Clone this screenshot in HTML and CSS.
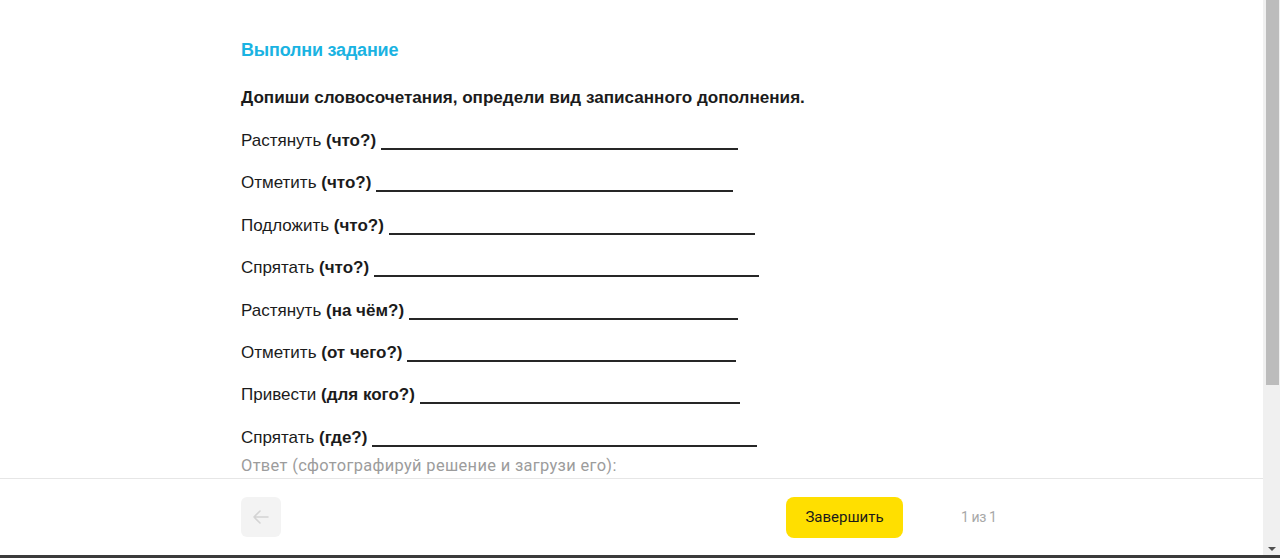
FILE: index.html
```html
<!DOCTYPE html>
<html lang="ru">
<head>
<meta charset="utf-8">
<title>Выполни задание</title>
<link rel="stylesheet" href="styles.css">
</head>
<body>
<div class="app">
  <div class="viewport">
    <main class="main">
      <h1 class="title">Выполни задание</h1>
      <p class="instruction">Допиши словосочетания, определи вид записанного дополнения.</p>
      <div class="rows">
        <div class="row">Растянуть <b>(что?)</b> <span class="blank w357"></span></div>
        <div class="row">Отметить <b>(что?)</b> <span class="blank w357"></span></div>
        <div class="row">Подложить <b>(что?)</b> <span class="blank w366"></span></div>
        <div class="row">Спрятать <b>(что?)</b> <span class="blank w385"></span></div>
        <div class="row">Растянуть <b>(на чём?)</b> <span class="blank w329"></span></div>
        <div class="row">Отметить <b>(от чего?)</b> <span class="blank w329"></span></div>
        <div class="row">Привести <b>(для кого?)</b> <span class="blank w320"></span></div>
        <div class="row">Спрятать <b>(где?)</b> <span class="blank w385"></span></div>
      </div>
      <p class="answer">Ответ (сфотографируй решение и загрузи его):</p>
    </main>
    <footer class="footer">
      <button class="back" aria-label="Назад">
        <svg width="20" height="20" viewBox="0 0 20 20" fill="none" stroke="#d4d4d4" stroke-width="1.6" stroke-linecap="round" stroke-linejoin="round"><path d="M17 10H3M9 4l-6 6 6 6"/></svg>
      </button>
      <button class="finish">Завершить</button>
      <span class="pager">1 из 1</span>
    </footer>
  </div>
  <div class="scrollbar">
    <div class="thumb"></div>
    <div class="arrow"></div>
  </div>
</div>
</body>
</html>
```
FILE: styles.css
```css
* { box-sizing: border-box; }
html, body { margin: 0; padding: 0; height: 100%; overflow: hidden; background: #fff; }
body { font-family: "Liberation Sans", Arial, sans-serif; color: #1b1b1b; }

.app {
  display: flex;
  height: 558px;
  border-bottom: 3px solid #3b3b3b;
}
.viewport {
  flex: 1;
  display: flex;
  flex-direction: column;
  min-width: 0;
}
.main {
  flex: 1;
  overflow: hidden;
  padding: 40px 0 0 241px;
}
.title {
  margin: 0;
  font-size: 18px;
  line-height: 20px;
  font-weight: 700;
  color: #1ab3e2;
  letter-spacing: -0.2px;
}
.instruction {
  margin: 28px 0 0;
  font-size: 17.1px;
  line-height: 20px;
  font-weight: 700;
  color: #1b1b1b;
}
.rows {
  display: flex;
  flex-direction: column;
  gap: 22.4px;
  margin-top: 23px;
}
.row {
  font-size: 17px;
  line-height: 20px;
  white-space: nowrap;
}
.row b { font-weight: 700; }
.blank {
  display: inline-block;
  height: 2px;
  border-bottom: 2px solid #262626;
  vertical-align: -4px;
}
.w357 { width: 357px; }
.w366 { width: 366px; }
.w385 { width: 385px; }
.w329 { width: 329px; }
.w320 { width: 320px; }

.answer {
  margin: 8px 0 0;
  font-family: "Roboto", "Liberation Sans", sans-serif;
  font-size: 16.4px;
  letter-spacing: 0.35px;
  line-height: 20px;
  color: #9c9c9c;
}

.footer {
  height: 77px;
  flex: none;
  border-top: 1px solid #e6e6e6;
  display: flex;
  align-items: center;
  padding-left: 241px;
}
.back {
  width: 40px;
  height: 40px;
  border: 0;
  border-radius: 6px;
  background: #f3f3f3;
  display: flex;
  align-items: center;
  justify-content: center;
  padding: 0;
}
.finish {
  margin-left: 505px;
  width: 117px;
  height: 41px;
  border: 0;
  border-radius: 8px;
  background: #ffdf00;
  font-family: "Roboto", "Liberation Sans", sans-serif;
  font-size: 15px;
  color: #1b1b1b;
  padding: 0;
}
.pager {
  margin-left: 58px;
  font-family: "Roboto", "Liberation Sans", sans-serif;
  font-size: 14px;
  letter-spacing: -0.4px;
  color: #a8a8a8;
}

.scrollbar {
  width: 17px;
  flex: none;
  background: #f0f0f0;
  display: flex;
  flex-direction: column;
  justify-content: space-between;
  align-items: center;
  padding: 0 0 4px 1px;
}
.thumb {
  width: 13px;
  height: 385px;
  background: #bcbcbc;
}
.arrow {
  width: 0;
  height: 0;
  border-left: 4px solid transparent;
  border-right: 4px solid transparent;
  border-top: 4px solid #505050;
}
```
